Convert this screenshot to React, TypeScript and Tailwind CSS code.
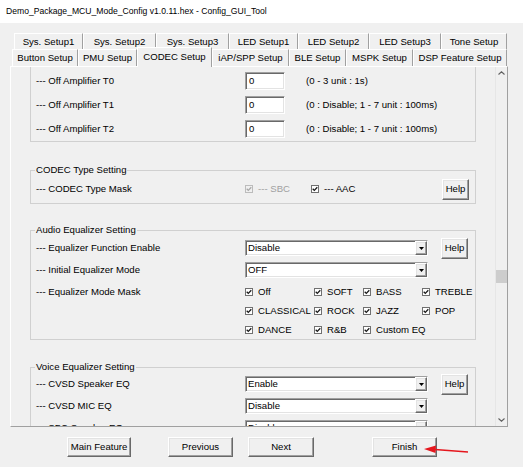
import React from 'react';

const raised =
  'border border-t-white border-l-white border-r-[#696969] border-b-[#696969] shadow-[inset_-1px_-1px_0_#a0a0a0,inset_1px_1px_0_#e3e3e3] bg-[#f0f0f0]';
const sunken =
  'border border-t-[#a0a0a0] border-l-[#a0a0a0] border-r-white border-b-white shadow-[inset_1px_1px_0_#696969,inset_-1px_-1px_0_#e3e3e3] bg-white';

const tabsBack = [
  { label: 'Sys. Setup1', w: 'w-[69px]' },
  { label: 'Sys. Setup2', w: 'w-[73px]' },
  { label: 'Sys. Setup3', w: 'w-[73px]' },
  { label: 'LED Setup1', w: 'w-[69px]' },
  { label: 'LED Setup2', w: 'w-[71px]' },
  { label: 'LED Setup3', w: 'w-[72px]' },
  { label: 'Tone Setup', w: 'w-[66px]' },
];

const tabsFront = [
  { label: 'Button Setup', w: 'w-[66px]' },
  { label: 'PMU Setup', w: 'w-[59px]' },
  { label: 'CODEC Setup', w: 'w-[75px]', active: true },
  { label: 'iAP/SPP Setup', w: 'w-[77px]' },
  { label: 'BLE Setup', w: 'w-[57px]' },
  { label: 'MSPK Setup', w: 'w-[67px]' },
  { label: 'DSP Feature Setup', w: 'w-[94px]' },
];

const eqModes = ['Off', 'SOFT', 'BASS', 'TREBLE', 'CLASSICAL', 'ROCK', 'JAZZ', 'POP', 'DANCE', 'R&B', 'Custom EQ'];

function Check({ disabled }: { disabled?: boolean }) {
  return (
    <svg width="8" height="8" viewBox="0 0 8 8" className="shrink-0">
      <rect x="0.5" y="0.5" width="7" height="7" fill={disabled ? '#f0f0f0' : '#fff'} stroke={disabled ? '#bcbcbc' : '#707070'} />
      <path d="M1.7 3.7 L3.3 5.4 L6.3 2.2" fill="none" stroke={disabled ? '#a8a8a8' : '#1a1a1a'} strokeWidth="1.3" />
    </svg>
  );
}

function Select({ value }: { value: string }) {
  return (
    <div className={`${sunken} w-[183px] h-[16px] flex items-stretch shrink-0`}>
      <span className="flex-1 pl-[2px] flex items-center">{value}</span>
      <div className={`${raised} w-[12px] flex items-center justify-center`}>
        <svg width="5" height="3" viewBox="0 0 5 3">
          <path d="M0 0h5L2.5 3z" fill="#000" />
        </svg>
      </div>
    </div>
  );
}

function HelpButton() {
  return <button className={`${raised} w-[27px] h-[21px] ml-[13px] flex items-center justify-center`}>Help</button>;
}

function Row({ label, children, h = 'h-[22px]' }: { label: string; children?: React.ReactNode; h?: string }) {
  return (
    <div className={`flex items-center pl-[5px] ${h}`}>
      <span className="w-[209px] shrink-0 whitespace-nowrap">{label}</span>
      {children}
    </div>
  );
}

function Group({ title, className, children }: { title: string; className: string; children: React.ReactNode }) {
  return (
    <div className={`relative w-[446px] border border-[#d0d0d0] ${className}`}>
      <span className="absolute -top-[7px] left-[4px] bg-[#f0f0f0] px-[1px] leading-[12px]">{title}</span>
      {children}
    </div>
  );
}

function Chevron({ up }: { up?: boolean }) {
  return (
    <svg width="7" height="4" viewBox="0 0 7 4">
      <path d={up ? 'M0.5 3.5 L3.5 0.8 L6.5 3.5' : 'M0.5 0.5 L3.5 3.2 L6.5 0.5'} fill="none" stroke="#606060" strokeWidth="1.1" />
    </svg>
  );
}

function ButtonBar() {
  return (
    <div className="flex mt-[10px] h-[20px]">
      <button className={`${raised} ml-[67px] w-[64px]`}>Main Feature</button>
      <button className={`${raised} ml-[37px] w-[65px]`}>Previous</button>
      <button className={`${raised} ml-[15px] w-[66px]`}>Next</button>
      <button className={`${raised} ml-[58px] w-[65px]`}>Finish</button>
    </div>
  );
}

export default function App() {
  return (
    <div className="relative w-[523px] h-[467px] overflow-hidden bg-[#f0f0f0] text-black text-[9.6px] leading-none font-['Liberation_Sans',Arial,sans-serif]">
      <div className="h-[23px] bg-white flex items-center pl-[6px] text-[8.6px]">
        Demo_Package_MCU_Mode_Config v1.0.11.hex - Config_GUI_Tool
      </div>

      {/* tab headers */}
      <div className="flex ml-[14px] mt-[10px] h-[16px]">
        {tabsBack.map(t => (
          <div key={t.label} className={`${t.w} border-t border-l border-t-white border-l-white border-r border-r-[#a0a0a0] flex items-center justify-center whitespace-nowrap`}>
            {t.label}
          </div>
        ))}
      </div>
      <div className="flex ml-[12px] h-[17px]">
        {tabsFront.map(t => (
          <div
            key={t.label}
            className={`${t.w} border-t border-l border-t-white border-l-white border-r border-r-[#a0a0a0] flex items-center justify-center whitespace-nowrap ${
              t.active ? 'relative z-10 -mt-[2px] h-[20px] bg-[#f0f0f0] pb-[1px]' : ''
            }`}
          >
            {t.label}
          </div>
        ))}
      </div>

      {/* tab page */}
      <div className="ml-[10px] w-[498px] h-[361px] border border-t-white border-l-white border-r-[#a0a0a0] border-b-[#a0a0a0] flex">
        <div className="flex-1 overflow-hidden pl-[19px]">
          <div className="w-[446px] border-x border-b border-[#d0d0d0] pt-[2px]">
            {[
              ['--- Off Amplifier T0', '(0 - 3 unit : 1s)'],
              ['--- Off Amplifier T1', '(0 : Disable; 1 - 7 unit : 100ms)'],
              ['--- Off Amplifier T2', '(0 : Disable; 1 - 7 unit : 100ms)'],
            ].map(([label, hint]) => (
              <Row key={label} label={label} h="h-[24px]">
                <div className={`${sunken} w-[40px] h-[18px] pl-[3px] flex items-center`}>0</div>
                <span className="ml-[21px]">{hint}</span>
              </Row>
            ))}
          </div>

          <Group title="CODEC Type Setting" className="mt-[28px] pt-[7px] pb-[3px]">
            <Row label="--- CODEC Type Mask">
              <div className="w-[66px] flex items-center gap-[5px] text-[#a0a0a0]">
                <Check disabled />
                <span>--- SBC</span>
              </div>
              <div className="flex items-center gap-[5px]">
                <Check />
                <span>--- AAC</span>
              </div>
              <div className="ml-auto mr-[6px]">
                <HelpButton />
              </div>
            </Row>
          </Group>

          <Group title="Audio Equalizer Setting" className="mt-[26px] pt-[6px]">
            <Row label="--- Equalizer Function Enable">
              <Select value="Disable" />
              <HelpButton />
            </Row>
            <Row label="--- Initial Equalizer Mode">
              <Select value="OFF" />
            </Row>
            <div className="flex pl-[5px] mt-[1px]">
              <span className="w-[209px] h-[19px] shrink-0 flex items-center">--- Equalizer Mode Mask</span>
              <div className="grid grid-cols-[69px_49px_59px_60px] auto-rows-[19px]">
                {eqModes.map(m => (
                  <div key={m} className="flex items-center gap-[5px] whitespace-nowrap">
                    <Check />
                    <span>{m}</span>
                  </div>
                ))}
              </div>
            </div>
          </Group>

          <Group title="Voice Equalizer Setting" className="mt-[27px] pt-[5px]">
            <Row label="--- CVSD Speaker EQ">
              <Select value="Enable" />
              <HelpButton />
            </Row>
            <Row label="--- CVSD MIC EQ">
              <Select value="Disable" />
            </Row>
            <Row label="--- SBC Speaker EQ">
              <Select value="Disable" />
            </Row>
          </Group>
        </div>

        {/* scrollbar */}
        <div className="w-[12px] border-l border-[#e6e6e6] flex flex-col">
          <div className="h-[12px] flex items-center justify-center">
            <Chevron up />
          </div>
          <div className="flex-1">
            <div className="mt-[191px] h-[13px] bg-[#cdcdcd]" />
          </div>
          <div className="h-[12px] flex items-center justify-center">
            <Chevron />
          </div>
        </div>
      </div>

      <ButtonBar />

      {/* annotation arrow */}
      <svg className="absolute left-[420px] top-[441px]" width="52" height="16" viewBox="0 0 52 16">
        <path d="M15 8.5 L48 11" stroke="#e5161d" strokeWidth="1.6" fill="none" />
        <path d="M4 8 L16 4.5 L15.5 12 Z" fill="#e5161d" />
      </svg>
    </div>
  );
}
